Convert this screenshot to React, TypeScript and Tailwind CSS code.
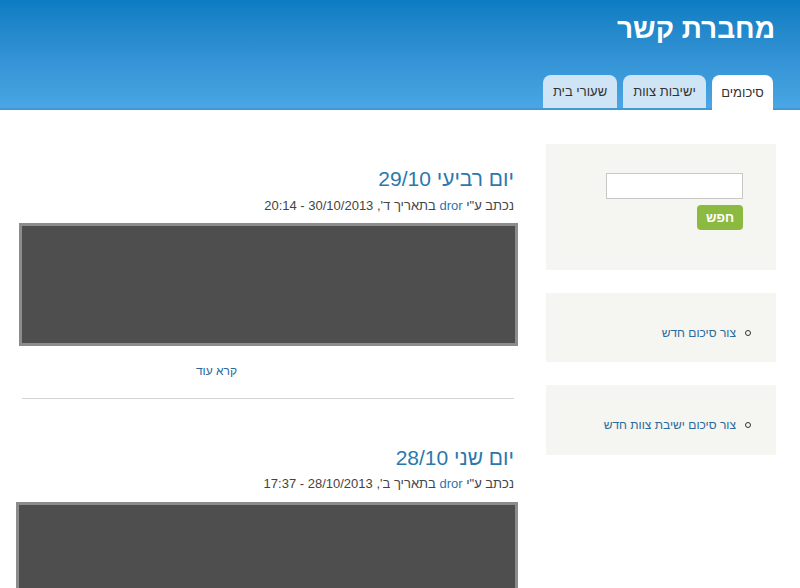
import React from 'react';

const font = { fontFamily: '"Liberation Sans", "DejaVu Sans", Arial, sans-serif' };

interface Post {
  title: string;
  day: string;
  date: string;
  time: string;
  last?: boolean;
}

const posts: Post[] = [
  { title: 'יום רביעי 29/10', day: "ד'", date: '30/10/2013', time: '20:14' },
  { title: 'יום שני 28/10', day: "ב'", date: '28/10/2013', time: '17:37', last: true },
];

const tabs = [
  { label: 'סיכומים', active: true, w: 'w-[61px]' },
  { label: 'ישיבות צוות', active: false, w: 'w-[83px]' },
  { label: 'שעורי בית', active: false, w: 'w-[74px]' },
];

const PostItem: React.FC<{ post: Post }> = ({ post }) => (
  <div className="flex flex-col">
    <h2 className="text-[21px] leading-[26px] text-[#2a78ad] pr-1">{post.title}</h2>
    <div className={`${post.last ? 'mt-[5px]' : 'mt-[6px]'} pr-1 text-[13px] leading-[16px] text-[#444]`}>
      נכתב ע"י <a className="text-[#2a78ad]">dror</a> בתאריך {post.day}, {post.date} - {post.time}
    </div>
    {post.last ? (
      <div className="mt-[10px] -ml-[2px] h-[90px] border-[3px] border-b-0 border-[#8c8c8c] bg-[#4e4e4e]" />
    ) : (
      <>
        <div className="mt-[9px] ml-[1px] h-[123px] border-[3px] border-[#8c8c8c] bg-[#4e4e4e]" />
        <div className="mt-[18px] pr-[281px] text-[12px] leading-[14px] text-[#2a6a9c]">קרא עוד</div>
        <div className="mt-[20px] mr-[4px] ml-[4px] h-px bg-[#d4d4d4]" />
      </>
    )}
  </div>
);

export default function App() {
  return (
    <div dir="rtl" className="w-[800px] h-[588px] overflow-hidden bg-white" style={font}>
      <header className="h-[110px] bg-linear-to-b from-[#0b7cc2] to-[#4aa6e4] border-b-[2px] border-[#3e9ad4] flex flex-col pr-[25px]">
        <h1 className="pt-[13px] text-[28px] leading-[32px] font-bold text-white">מחברת קשר</h1>
        <nav className="mt-auto flex gap-[6px] pr-[2px]">
          {tabs.map((t) => (
            <div
              key={t.label}
              className={`${t.w} h-[33px] rounded-t-[8px] flex items-center justify-center text-[13px] text-[#333] ${
                t.active ? 'bg-white h-[35px] -mb-[2px]' : 'bg-[#cfe5f5]'
              }`}
            >
              {t.label}
            </div>
          ))}
        </nav>
      </header>

      <div className="flex gap-[28px] pr-[24px]">
        <aside className="w-[230px] shrink-0 pt-[34px] flex flex-col gap-[23px]">
          <div className="h-[126px] bg-[#f5f5f1] flex flex-col items-start pr-[33px] pt-[29px]">
            <input className="w-[137px] h-[26px] border border-[#c8c8c8] bg-white" />
            <button className="mt-[6px] w-[46px] h-[25px] rounded-[4px] bg-[#8cba41] text-white font-bold text-[13px]">
              חפש
            </button>
          </div>
          <div className="h-[69px] bg-[#f5f5f1] flex items-center pr-[25px] pt-[10px]">
            <span className="w-[6px] h-[6px] rounded-full border border-[#333] ml-[9px]" />
            <span className="text-[12px] text-[#2a6a9c]">צור סיכום חדש</span>
          </div>
          <div className="h-[70px] bg-[#f5f5f1] flex items-center pr-[25px] pt-[10px]">
            <span className="w-[6px] h-[6px] rounded-full border border-[#333] ml-[9px]" />
            <span className="text-[12px] text-[#2a6a9c]">צור סיכום ישיבת צוות חדש</span>
          </div>
        </aside>

        <main className="w-[500px] shrink-0 pt-[56px] flex flex-col gap-[46px]">
          {posts.map((p) => (
            <PostItem key={p.title} post={p} />
          ))}
        </main>
      </div>
    </div>
  );
}
